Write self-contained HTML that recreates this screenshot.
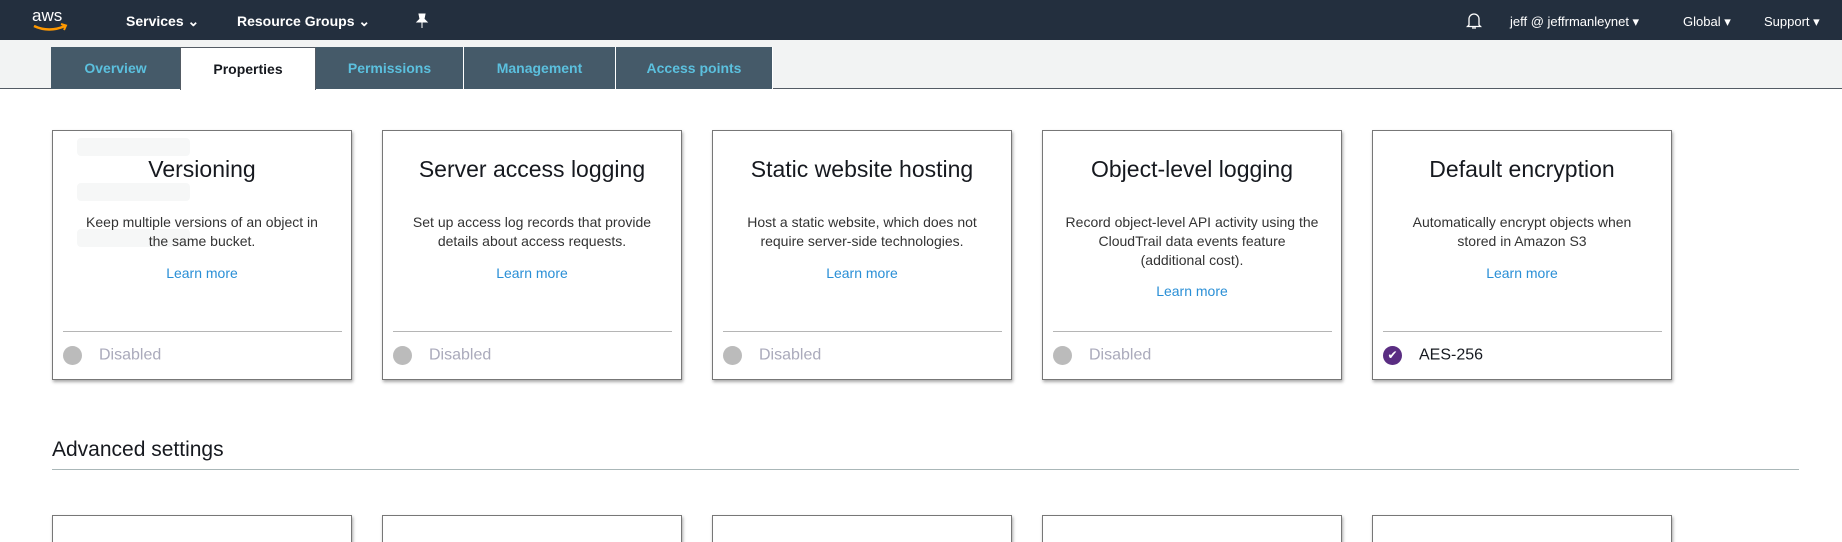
<!DOCTYPE html>
<html style="width:1842px;height:542px;overflow:hidden"><head><meta charset="utf-8"><style>
*{box-sizing:border-box;margin:0;padding:0}
body{width:1842px;height:542px;overflow:hidden;background:#fff;font-family:"Liberation Sans",Arial,sans-serif;position:relative}
.nav{position:absolute;left:0;top:0;width:1842px;height:40px;background:#232f3e;color:#fff}
.nav span{position:absolute;top:12px;font-size:15px}
.nav .r{font-size:13px;top:14px}
.tabbar{position:absolute;left:0;top:40px;width:1842px;height:49px;background:#f2f3f3;border-bottom:1px solid #545b64}
.tab{position:absolute;top:7px;height:42px;background:#455a69;color:#5bc0de;font-weight:bold;font-size:14px;text-align:center;line-height:42px;border-right:1px solid #fff}
.tab.act{background:#fff;color:#16191f;border:1px solid #545b64;border-bottom:none;height:43px;top:7px;z-index:2}
.card{position:absolute;top:130px;width:300px;height:250px;border:1px solid #777;box-shadow:1px 2px 3px rgba(0,0,0,.35);background:#fff;overflow:hidden;text-align:center}
.card h2{position:absolute;left:0;right:0;top:25px;font-weight:normal;font-size:23px;color:#16191f}
.card p{position:absolute;left:30px;right:30px;top:82px;font-size:14px;line-height:19px;color:#333}
.card a{position:absolute;left:0;right:0;font-size:14px;color:#2a8fd6;text-decoration:none}
.card .hr{position:absolute;left:10px;right:9px;top:200px;border-top:1px solid #b5b5b5}
.card .st{position:absolute;left:10px;top:215px;text-align:left;font-size:16px;color:#aab}
.dot{display:inline-block;width:19px;height:19px;border-radius:50%;background:#bbb;vertical-align:middle;margin-right:17px}
.bg{position:absolute;background:#f6f7f7;border-radius:4px}
.card2{position:absolute;top:515px;width:300px;height:30px;border:1px solid #777;background:#fff;box-shadow:1px 2px 3px rgba(0,0,0,.35)}
</style></head><body>
<div class="nav">
<svg style="position:absolute;left:31px;top:6px" width="42" height="28" viewBox="0 0 42 28"><text x="1" y="15" fill="#fff" font-family="Liberation Sans" font-size="17">aws</text><path d="M3 20 Q18 27 34 20" stroke="#f90" stroke-width="2.5" fill="none"/><path d="M30 18 L35 19.5 L33 24" stroke="#f90" stroke-width="2" fill="none"/></svg>
<span style="left:126px;font-weight:bold;font-size:14px;top:13px">Services &#8964;</span>
<span style="left:237px;font-weight:bold;font-size:14px;top:13px">Resource Groups &#8964;</span>
<svg style="position:absolute;left:415px;top:13px" width="14" height="16" viewBox="0 0 14 16"><path d="M4 1 H10 L9 6 L12 9 H2 L5 6 Z M7 9 V15" fill="#fff" stroke="#fff" stroke-width="1"/></svg>
<svg style="position:absolute;left:1466px;top:12px" width="16" height="18" viewBox="0 0 16 18"><path d="M3 13 V7 a5 5 0 0 1 10 0 V13 L14.5 14.5 H1.5 Z M6 16 h4" stroke="#fff" stroke-width="1.3" fill="none"/></svg>
<span class="r" style="left:1510px">jeff @ jeffrmanleynet &#9662;</span>
<span class="r" style="left:1683px">Global &#9662;</span>
<span class="r" style="left:1764px">Support &#9662;</span>
</div>
<div class="tabbar">
<div class="tab" style="left:51px;width:130px">Overview</div>
<div class="tab act" style="left:180px;width:136px">Properties</div>
<div class="tab" style="left:316px;width:148px">Permissions</div>
<div class="tab" style="left:464px;width:152px">Management</div>
<div class="tab" style="left:616px;width:157px">Access points</div>
</div>

<div class="card" style="left:52px">
<div class="bg" style="left:24px;top:7px;width:113px;height:18px"></div>
<div class="bg" style="left:24px;top:52px;width:113px;height:18px"></div>
<div class="bg" style="left:24px;top:98px;width:113px;height:18px"></div>
<h2>Versioning</h2><p>Keep multiple versions of an object in the same bucket.</p><a style="top:134px">Learn more</a>
<div class="hr"></div><div class="st"><span class="dot"></span>Disabled</div></div>

<div class="card" style="left:382px">
<h2>Server access logging</h2><p style="left:18px;right:18px">Set up access log records that provide details about access requests.</p><a style="top:134px">Learn more</a>
<div class="hr"></div><div class="st"><span class="dot"></span>Disabled</div></div>

<div class="card" style="left:712px">
<h2>Static website hosting</h2><p>Host a static website, which does not require server-side technologies.</p><a style="top:134px">Learn more</a>
<div class="hr"></div><div class="st"><span class="dot"></span>Disabled</div></div>

<div class="card" style="left:1042px">
<h2>Object-level logging</h2><p style="left:22px;right:22px">Record object-level API activity using the CloudTrail data events feature (additional cost).</p><a style="top:152px">Learn more</a>
<div class="hr"></div><div class="st"><span class="dot"></span>Disabled</div></div>

<div class="card" style="left:1372px">
<h2>Default encryption</h2><p style="left:36px;right:36px">Automatically encrypt objects when stored in Amazon S3</p><a style="top:134px">Learn more</a>
<div class="hr"></div><div class="st" style="color:#16191f"><span class="dot" style="background:#5a2d82;text-align:center;line-height:19px;color:#fff;font-size:12px;margin-right:17px">&#10004;</span>AES-256</div></div>

<div style="position:absolute;left:52px;top:438px;font-size:21px;color:#16191f">Advanced settings</div>
<div style="position:absolute;left:52px;top:469px;width:1747px;border-top:1px solid #aab7b8"></div>

<div class="card2" style="left:52px"></div>
<div class="card2" style="left:382px"></div>
<div class="card2" style="left:712px"></div>
<div class="card2" style="left:1042px"></div>
<div class="card2" style="left:1372px"></div>
</body></html>
